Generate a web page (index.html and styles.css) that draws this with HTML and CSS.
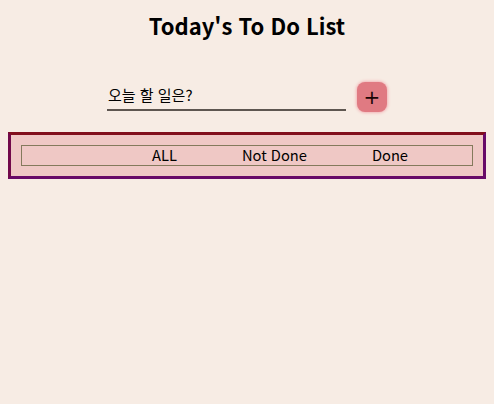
FILE: index.html
```html
<!DOCTYPE html>
<html lang="ko">
<head>
<meta charset="utf-8">
<link rel="stylesheet" href="styles.css">
</head>
<body>
<h1 class="title">Today's To Do List</h1>
<div class="add-row">
  <input class="task-input" type="text" value="오늘 할 일은?">
  <button class="add-btn">+</button>
</div>
<div class="filter-box">
  <div class="tabs">
    <span class="tab">ALL</span>
    <span class="tab">Not Done</span>
    <span class="tab">Done</span>
  </div>
</div>
</body>
</html>
```
FILE: styles.css
```css
html, body {
  background: #f7ece4;
}
body {
  margin: 0;
  padding: 0 8px;
  font-family: "Noto Sans CJK KR", "Noto Sans", sans-serif;
  color: #000;
}
.title {
  margin: 0;
  padding-top: 9px;
  height: 36px;
  font-size: 22px;
  line-height: 32px;
  font-weight: 700;
  text-align: center;
}
.add-row {
  margin-top: 37px;
  display: flex;
  justify-content: center;
  align-items: flex-end;
  gap: 11px;
}
.task-input {
  width: 239px;
  height: 28px;
  box-sizing: border-box;
  border: none;
  border-bottom: 2px solid #5e5650;
  background: transparent;
  font-family: inherit;
  font-size: 15px;
  padding: 0 0 3px 1px;
  color: #000;
  outline: none;
}
.add-btn {
  width: 30px;
  height: 30px;
  margin-bottom: -1px;
  border: none;
  border-radius: 8px;
  background: #e07a82;
  box-shadow: 0 0 3px 1px #f3b3b6;
  font-family: "DejaVu Sans", sans-serif;
  font-size: 20px;
  font-weight: 400;
  line-height: 30px;
  padding: 0;
  color: #1a0505;
}
.filter-box {
  margin-top: 21px;
  height: 47px;
  box-sizing: border-box;
  border: 3px solid #680a68;
  border-top-color: #820f1c;
  border-left-color: #72094a;
  background: #efc8c5;
  padding: 10px 10px;
}
.tabs {
  height: 21px;
  box-sizing: border-box;
  border: 1px solid #847a5c;
  display: flex;
  align-items: center;
  padding-left: 130px;
  padding-bottom: 2px;
  gap: 65px;
  font-size: 14.7px;
  line-height: 17px;
}
.tab {
  color: #000;
}
```
